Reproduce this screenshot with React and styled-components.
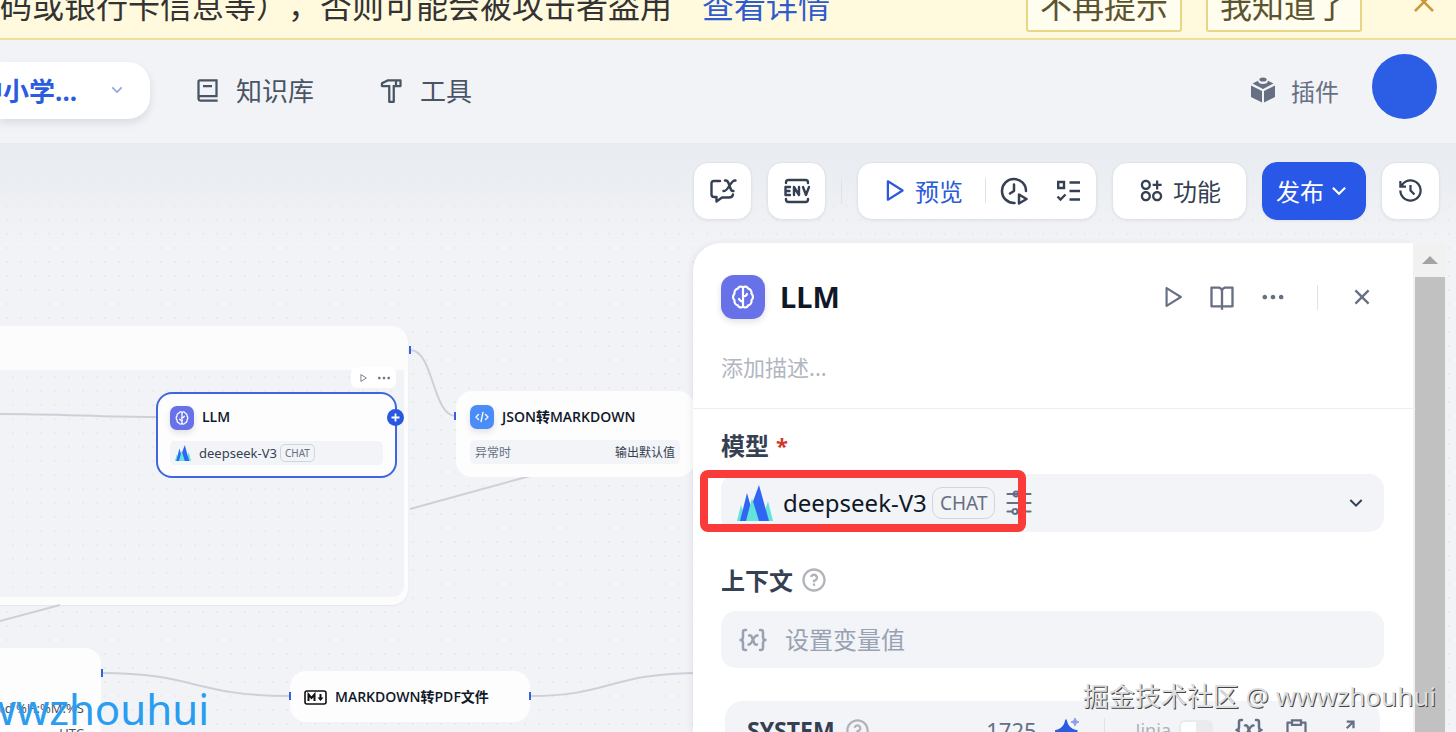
import React, { useState } from 'react';
import styled, { createGlobalStyle } from 'styled-components';
import {
  RiApps2AddLine,
  RiArrowDownSLine,
  RiBook2Line,
  RiBookOpenLine,
  RiClipboardLine,
  RiCloseLine,
  RiExpandDiagonalLine,
  RiHammerLine,
  RiHistoryLine,
  RiMoreFill,
  RiPlayLargeLine,
  RiQuestionLine,
} from 'react-icons/ri';

const GlobalStyle = createGlobalStyle`
  * {
    box-sizing: border-box;
  }

  body {
    margin: 0;
    overflow: hidden;
    background: #f1f3f7;
    color: #354052;
    font-family: 'Noto Sans', 'Noto Sans CJK SC', sans-serif;
    text-spacing-trim: space-all;
  }

  button, input, select {
    margin: 0;
    padding: 0;
    border: none;
    background: none;
    color: inherit;
    font: inherit;
    outline: none;
  }

  button {
    cursor: pointer;
  }

  svg {
    display: block;
    flex-shrink: 0;
  }
`;

const Page = styled.div`
  display: flex;
  flex-direction: column;
  height: 100vh;
  overflow: hidden;
`;

/* banner */

const Banner = styled.div`
  display: flex;
  align-items: flex-end;
  flex-shrink: 0;
  height: 40px;
  padding: 0 20px 6px 0;
  overflow: hidden;
  background: #fff9de;
  border-bottom: 2px solid #f3dd9a;
  color: #333;
  font-size: 32px;
  line-height: 52px;
  white-space: nowrap;
`;

const BannerLink = styled.a`
  margin-left: 30px;
  color: #2f5bd0;
  text-decoration: none;
`;

const BannerActions = styled.div`
  display: flex;
  gap: 24px;
  margin-left: auto;
  margin-right: 50px;
`;

const BannerButton = styled.button`
  height: 48px;
  padding: 0 12px 4px;
  border: 2px solid #e8d684;
  border-radius: 3px;
  background: #fffdee;
  color: #5c5331;
  line-height: 40px;
`;

const BannerClose = styled.button`
  display: flex;
  align-items: center;
  height: 60px;
  color: #c79a3a;
`;

/* navigation */

const Nav = styled.nav`
  display: flex;
  align-items: center;
  flex-shrink: 0;
  height: 103px;
  padding: 0 19px 3px 0;
  background: #f1f3f7;
`;

const AppSwitch = styled.button`
  display: flex;
  align-items: center;
  justify-content: flex-end;
  gap: 30px;
  width: 150px;
  height: 57px;
  padding-right: 23px;
  overflow: hidden;
  border-radius: 0 22px 22px 0;
  background: #fff;
  box-shadow: 0 4px 8px rgba(16, 24, 40, 0.1);
  color: #2b5ce0;
  font-size: 26px;
  font-weight: 700;
  white-space: nowrap;

  svg {
    color: #8fa3e6;
  }
`;

const NavLink = styled.a`
  display: flex;
  align-items: center;
  gap: 15px;
  margin-left: ${(props) => (props.$first ? '44px' : '64px')};
  color: #495464;
  font-size: 26px;
  text-decoration: none;
`;

const PluginLink = styled.a`
  display: flex;
  align-items: center;
  gap: 15px;
  margin-left: auto;
  color: #676f83;
  font-size: 24px;
  text-decoration: none;
`;

const Avatar = styled.button`
  width: 65px;
  height: 65px;
  margin: 0 0 7px 33px;
  border-radius: 50%;
  background: #2c5de5;
`;

/* canvas */

const Workspace = styled.main`
  position: relative;
  display: flex;
  flex: 1;
  justify-content: flex-end;
  min-height: 0;
`;

const Canvas = styled.div`
  position: absolute;
  inset: 0;
  overflow: hidden;
  background-color: #f1f3f7;
  background-image:
    linear-gradient(#e8ebef, rgba(241, 243, 247, 0) 100px),
    radial-gradient(circle, #e8ebf0 1px, transparent 1px);
  background-size: 100% 100%, 14px 14px;
`;

const Edges = styled.svg`
  position: absolute;
  top: 0;
  left: 0;
  width: 700px;
  height: 600px;
  fill: none;
  stroke: #cdd0d8;
  stroke-width: 2;
`;

const Node = styled.section`
  position: absolute;
  left: ${(props) => props.$x}px;
  top: ${(props) => props.$y}px;
  width: ${(props) => props.$width}px;
  padding: 12px 12px 11px;
  border: 2px solid ${(props) => (props.$selected ? '#3f66e0' : '#fdfdfe')};
  border-radius: 16px;
  background: #fdfdfe;
  color: #101828;
`;

const NodeTitle = styled.h3`
  display: flex;
  align-items: center;
  gap: 8px;
  height: 24px;
  margin: 0;
  font-family: 'Open Sans', 'Noto Sans CJK SC', sans-serif;
  font-size: 14px;
  font-weight: 600;
  white-space: nowrap;
`;

const NodeName = styled.span`
  padding-bottom: 3px;
`;

const NodeRow = styled.div`
  display: flex;
  align-items: center;
  justify-content: ${(props) => (props.$spread ? 'space-between' : 'flex-start')};
  gap: ${(props) => (props.$spread ? '0' : '3px')};
  height: 24px;
  margin-top: 11px;
  padding: 0 5px;
  border-radius: 5px;
  background: #f2f4f7;
  color: #354052;
  font-size: 12px;
  white-space: nowrap;
`;

const NodeModel = styled.span`
  margin-left: 5px;
  font-size: 13px;
`;

const Muted = styled.span`
  color: #676f83;
`;

const Group = styled.section`
  position: absolute;
  left: -40px;
  top: 183px;
  width: 448px;
  height: 279px;
  padding: 44px 4px 8px;
  border-radius: 16px;
  background: #fcfcfd;
  box-shadow: 0 1px 2px rgba(16, 24, 40, 0.06);
`;

const GroupBody = styled.div`
  height: 100%;
  border-radius: 0 0 12px 12px;
  background-color: #f1f3f7;
  background-image: radial-gradient(circle, #e8ebf0 1px, transparent 1px);
  background-size: 14px 14px;
`;

const NodeTools = styled.div`
  position: absolute;
  left: 351px;
  top: 224px;
  display: flex;
  align-items: center;
  gap: 8px;
  height: 21px;
  padding: 0 4px 0 7px;
  border-radius: 6px;
  background: #fff;
  color: #676f83;
`;

const ToolIcon = styled.button`
  display: flex;
`;

const Handle = styled.i`
  position: absolute;
  left: ${(props) => props.$x}px;
  top: ${(props) => props.$y}px;
  width: 2px;
  height: 8px;
  background: #3461e2;
`;

const AddHandle = styled.button`
  position: absolute;
  left: 387px;
  top: 266px;
  display: flex;
  align-items: center;
  justify-content: center;
  width: 17px;
  height: 17px;
  border-radius: 50%;
  background: #2857e0;
`;

const TimeNode = styled.section`
  position: absolute;
  left: -139px;
  top: 505px;
  width: 240px;
  height: 140px;
  padding: 48px 17px 0;
  border-radius: 16px;
  background: #fdfdfe;
  color: #495464;
  font-size: 13px;
  line-height: 25px;
  text-align: right;
`;

const BlueMark = styled.div`
  position: absolute;
  right: calc(100% - 209px);
  top: 538px;
  color: #2b9df0;
  font-size: 42px;
  line-height: 56px;
`;

/* right side */

const Side = styled.div`
  position: relative;
  display: flex;
  flex-direction: column;
  align-items: flex-end;
  gap: 23px;
  width: 763px;
  padding-top: 19px;
`;

const Toolbar = styled.div`
  display: flex;
  align-items: center;
  gap: 15px;
  margin-right: 16px;
`;

const ToolButton = styled.button`
  display: flex;
  align-items: center;
  justify-content: center;
  gap: ${(props) => (props.$primary ? '2px' : '8px')};
  width: ${(props) => props.$width || 59}px;
  height: 58px;
  padding-bottom: 1px;
  border: 1px solid ${(props) => (props.$primary ? '#2957e8' : '#e1e4ea')};
  border-radius: 15px;
  background: ${(props) => (props.$primary ? '#2957e8' : '#fff')};
  box-shadow: 0 1px 3px rgba(16, 24, 40, 0.06);
  color: ${(props) => (props.$primary ? '#fff' : '#354052')};
  font-size: 24px;
  white-space: nowrap;
`;

const RunGroup = styled.div`
  display: flex;
  align-items: center;
  width: 240px;
  height: 58px;
  padding: 0 12px 1px 22px;
  border: 1px solid #e1e4ea;
  border-radius: 15px;
  background: #fff;
  box-shadow: 0 1px 3px rgba(16, 24, 40, 0.06);
`;

const PreviewButton = styled.button`
  display: flex;
  align-items: center;
  gap: 8px;
  margin-right: 22px;
  color: #2b5ad9;
  font-size: 24px;
  white-space: nowrap;
`;

const RunIcon = styled.button`
  display: flex;
  margin-left: ${(props) => (props.$wide ? '28px' : '14px')};
  color: #354052;
`;

const Divider = styled.span`
  flex-shrink: 0;
  width: 1px;
  height: 25px;
  margin: 0 ${(props) => props.$space || 0}px;
  background: #dfe2e8;
`;

const PanelWrap = styled.div`
  display: flex;
  flex: 1;
  width: 100%;
  min-height: 0;
  padding-right: 10px;
`;

const Panel = styled.aside`
  flex: 1;
  overflow: hidden;
  border-radius: 28px 0 0 0;
  background: #fff;
  box-shadow: -2px 0 6px rgba(16, 24, 40, 0.06);
`;

const PanelHeader = styled.header`
  height: 166px;
  padding: 32px 37px 0 28px;
  border-bottom: 1px solid #eceef1;
`;

const TitleRow = styled.div`
  display: flex;
  align-items: center;
  height: 44px;
`;

const Title = styled.h2`
  margin: 0 auto 0 15px;
  padding-bottom: 2px;
  color: #101828;
  font-size: 29px;
  font-weight: 700;
`;

const HeaderActions = styled.div`
  display: flex;
  align-items: center;
  gap: 23px;
  color: #676f83;

  button {
    display: flex;
  }
`;

const Description = styled.input`
  width: 100%;
  height: 32px;
  margin-top: 32px;
  font-size: 22px;

  &::placeholder {
    color: #b2b6bf;
    opacity: 1;
  }
`;

const Badge = styled.span`
  display: flex;
  align-items: center;
  height: ${(props) => (props.$small ? '18px' : '32px')};
  padding: 0 ${(props) => (props.$small ? '4px' : '7px')};
  border: 1px solid #d0d5dd;
  border-radius: ${(props) => (props.$small ? '5px' : '10px')};
  color: #676f83;
  font-size: ${(props) => (props.$small ? '10px' : '19px')};
`;

const NodeIcon = styled.span`
  display: flex;
  align-items: center;
  justify-content: center;
  flex-shrink: 0;
  width: ${(props) => props.$size}px;
  height: ${(props) => props.$size}px;
  border-radius: ${(props) => (props.$size > 30 ? '13px' : '7px')};
  background: ${(props) => props.$color || '#6772e8'};
  box-shadow: 0 3px 6px rgba(16, 24, 40, 0.12);
`;

const PanelBody = styled.div`
  padding: 19px 29px 0 28px;
`;

const FieldLabel = styled.label`
  display: flex;
  align-items: center;
  gap: 7px;
  height: 36px;
  margin-bottom: ${(props) => (props.$tight ? '12px' : '10px')};
  padding-bottom: 3px;
  font-size: 24px;
  font-weight: 700;

  svg {
    color: #b0b3b8;
  }
`;

const Required = styled.span`
  color: #d0382c;
  font-size: 22px;
`;

const ModelBox = styled.div`
  position: relative;
  display: flex;
  align-items: center;
  height: 58px;
  margin-bottom: 31px;
  padding: 0 16px;
  border-radius: 15px;
  background: #f2f4f7;
`;

const ModelSelect = styled.select`
  appearance: none;
  margin: 0 5px 0 10px;
  padding-bottom: 2px;
  color: #101828;
  font-size: 24px;
`;

const ModelTune = styled.button`
  display: flex;
  margin: 0 auto 0 11px;
  color: #676f83;
`;

const Highlight = styled.div`
  position: absolute;
  left: -21px;
  top: -4px;
  width: 326px;
  height: 62px;
  border: 8px solid #fb3a3a;
  border-radius: 8px;
  pointer-events: none;
`;

const ContextBox = styled.div`
  display: flex;
  align-items: center;
  gap: 18px;
  height: 57px;
  margin-bottom: 33px;
  padding: 0 18px;
  border-radius: 15px;
  background: #f2f4f7;
  color: #98a2b3;
`;

const ContextInput = styled.input`
  flex: 1;
  font-size: 24px;

  &::placeholder {
    color: #98a2b3;
    opacity: 1;
  }
`;

const PromptBox = styled.div`
  display: flex;
  align-items: center;
  height: 100px;
  margin: 0 4px;
  padding: 0 22px 42px;
  border-radius: 18px;
  background: #f2f4f7;
  color: #676f83;
`;

const PromptTitle = styled.span`
  display: flex;
  align-items: center;
  gap: 9px;
  margin-right: auto;
  color: #354052;
  font-size: 23px;
  font-weight: 700;

  svg {
    color: #b0b3b8;
  }
`;

const Count = styled.span`
  margin-right: 18px;
  font-size: 22px;
`;

const JinjaLabel = styled.label`
  display: flex;
  align-items: center;
  gap: 8px;
  margin: 0 22px 0 6px;
  color: #adb2bb;
  font-size: 18px;
`;

const JinjaSwitch = styled.input`
  appearance: none;
  width: 34px;
  height: 20px;
  border: 2px solid #e9ebee;
  border-radius: 6px;
  background: linear-gradient(90deg, #fff 50%, #e9ebee 50%);
`;

const PromptIcon = styled.button`
  display: flex;
  margin-left: ${(props) => props.$gap || 0}px;
`;

const ScrollBar = styled.div`
  display: flex;
  flex-direction: column;
  width: 33px;
  padding: 0 1px 0 2px;
  background: #f1f1f1;
`;

const ScrollArrow = styled.div`
  display: flex;
  align-items: center;
  justify-content: center;
  height: 34px;
`;

const ScrollThumb = styled.div`
  flex: 1;
  background: #c1c1c1;
`;

const GrayMark = styled.div`
  position: absolute;
  right: 20px;
  bottom: 17px;
  color: #dedede;
  font-size: 26px;
  line-height: 37px;
  text-shadow: 1px 1px 0 #444;
  white-space: nowrap;
`;

const BrainIcon = ({ size }) => (
  <svg width={size} height={size} viewBox="0 0 24 24" fill="none" stroke="#fff" strokeWidth="2.2" strokeLinecap="round" strokeLinejoin="round">
    <path d="M12 2.500C10.500 1 7.500 1.500 6.800 3.600C4.500 4 3 6.500 3.500 8.700C1.500 10.500 1.500 13.500 3.500 15.300C3 17.500 4.500 20 6.800 20.400C7.500 22.500 10.500 23 12 21.500Z" />
    <path d="M12 2.500C13.500 1 16.500 1.500 17.200 3.600C19.500 4 21 6.500 20.500 8.700C22.500 10.500 22.500 13.500 20.500 15.300C21 17.500 19.500 20 17.200 20.400C16.500 22.500 13.500 23 12 21.500" />
    <path d="M12 11.500C14 11.500 15.500 10.500 16 9M12 16.500C10.500 16.500 8.800 15.500 8 14" />
  </svg>
);

const ModelLogo = ({ size }) => (
  <svg width={size} height={size} viewBox="0 0 36 36">
    <path d="M0 36L4 20L9 36Z" fill="#62e3dc" />
    <path d="M36 36L31 16L25 36Z" fill="#62e3dc" />
    <path d="M3 36L10 8L18 36Z" fill="#2f66f2" />
    <path d="M14 22L22 0L32 36H20Z" fill="#2f66f2" />
    <path d="M9 36L15 13L22 36Z" fill="#62e3dc" />
  </svg>
);

const SlidersIcon = () => (
  <svg width="26" height="26" viewBox="0 0 26 26" fill="none" stroke="currentColor" strokeWidth="2.200" strokeLinecap="round">
    <path d="M1.500 4H24.500M1.500 13H24.500M1.500 21.500H6M12 21.500H24.500" />
    <circle cx="10" cy="4" r="2.500" />
    <circle cx="16" cy="13" r="2.500" />
    <circle cx="9" cy="21.500" r="2.500" />
  </svg>
);

const VariableIcon = () => (
  <svg width="28" height="24" viewBox="0 0 28 24" fill="none" stroke="currentColor" strokeWidth="2.500" strokeLinecap="round" strokeLinejoin="round">
    <path d="M7 2H6Q4 2 4 4V9Q4 12 1.500 12Q4 12 4 15V20Q4 22 6 22H7M21 2H22Q24 2 24 4V9Q24 12 26.500 12Q24 12 24 15V20Q24 22 22 22H21" />
    <path d="M10 7.500Q12 6.500 13 9.500L15 14.500Q16 17.500 18 16.500M18.500 7.500Q16.500 7 14 11.500Q11.500 17 9.500 16.500" />
  </svg>
);

const BubbleIcon = () => (
  <svg width="28" height="26" viewBox="0 0 28 26" fill="none" stroke="currentColor" strokeWidth="2.400" strokeLinecap="round" strokeLinejoin="round">
    <path d="M11 3H5Q2.500 3 2.500 5.500V16.500Q2.500 19 5 19H7.500V23.500L13 19.500H20Q23.500 19.500 24 16.500" />
    <path d="M16 2.500Q18.500 2 19.500 5L21.500 10.500Q22.500 13.500 24.500 13M26.500 2.500Q24 2 20.500 7.500Q17 13.500 14.500 13" />
  </svg>
);

const EnvIcon = () => (
  <svg width="28" height="26" viewBox="0 0 28 26" fill="none" stroke="currentColor" strokeWidth="2.400" strokeLinecap="round" strokeLinejoin="round">
    <path d="M3 5V4.500Q3 2 5.500 2H22.500Q25 2 25 4.500V5M3 21V21.500Q3 24 5.500 24H22.500Q25 24 25 21.500V21" />
    <path d="M7 9H2.500V17H7M2.500 13H6.500M11 17V9L16 17V9M20 9L23 17L26 9" />
  </svg>
);

const RunHistoryIcon = () => (
  <svg width="28" height="28" viewBox="0 0 28 28" fill="none" stroke="currentColor" strokeWidth="2.500" strokeLinecap="round" strokeLinejoin="round">
    <path d="M14.500 26A12 12 0 1 1 26 14" />
    <path d="M14 7.500V14L10 16.500M19 17.500L26.500 22L19 26.500Z" />
  </svg>
);

const ChecklistIcon = () => (
  <svg width="25" height="24" viewBox="0 0 25 24" fill="none" stroke="currentColor" strokeWidth="2.400">
    <path d="M2.200 3H8V9H2.200ZM13.500 3.500H24M13.500 12H24M13.500 20.500H24M1.500 17.500L4.500 20.500L9.500 15.500" />
  </svg>
);

const PluginIcon = () => (
  <svg width="26" height="26" viewBox="0 0 26 26" fill="currentColor">
    <path d="M1 8.500L12 14V25.500L1 20ZM25 8.500L14 14V25.500L25 20Z" />
    <path d="M2.500 6.500L8 3.800Q8.500 7 13 7Q17.500 7 18 3.800L23.500 6.500L13 12Z" />
    <ellipse cx="13" cy="2.500" rx="3.600" ry="2" />
  </svg>
);

const CodeIcon = () => (
  <svg width="14" height="14" viewBox="0 0 14 14" fill="none" stroke="#fff" strokeWidth="1.300" strokeLinecap="round" strokeLinejoin="round">
    <path d="M3.500 4.500L1 7L3.500 9.500M10.500 4.500L13 7L10.500 9.500M8 2.500L6 11.500" />
  </svg>
);

const MarkdownIcon = () => (
  <svg width="23" height="15" viewBox="0 0 23 15" fill="none" stroke="#111" strokeWidth="1.600">
    <rect x="1" y="1" width="21" height="13" rx="2" />
    <path d="M4.500 11V4.500L7.500 8L10.500 4.500V11" strokeWidth="2" />
    <path d="M16.500 4V9" strokeWidth="2" />
    <path d="M13.500 7.500H19.500L16.500 11Z" fill="#111" stroke="none" />
  </svg>
);

const SparkleIcon = () => (
  <svg width="24" height="24" viewBox="0 0 24 24" fill="#2b5ce0">
    <path d="M11 2Q12.500 11 22 13Q12.500 15 11 24Q9.500 15 0 13Q9.500 11 11 2Z" strokeWidth="1.500" stroke="#2b5ce0" strokeLinejoin="round" />
    <path d="M20 0Q20.500 3.500 24 4Q20.500 4.500 20 8Q19.500 4.500 16 4Q19.500 3.500 20 0Z" fill="#8f9cea" stroke="#8f9cea" />
  </svg>
);

const App = () => {
  const [description, setDescription] = useState('');
  const [context, setContext] = useState('');
  const [jinja, setJinja] = useState(false);

  return (
    <Page>
      <GlobalStyle />
      <Banner>
        <span>码或银行卡信息等），否则可能会被攻击者盗用</span>
        <BannerLink href="#details">查看详情</BannerLink>
        <BannerActions>
          <BannerButton type="button">不再提示</BannerButton>
          <BannerButton type="button">我知道了</BannerButton>
        </BannerActions>
        <BannerClose type="button" aria-label="关闭">
          <svg width="24" height="24" viewBox="0 0 24 24" fill="none" stroke="currentColor" strokeWidth="2.500">
            <path d="M3 3L21 21M21 3L3 21" />
          </svg>
        </BannerClose>
      </Banner>

      <Nav>
        <AppSwitch type="button">
          <span>中小学...</span>
          <RiArrowDownSLine size={20} />
        </AppSwitch>
        <NavLink href="#knowledge" $first>
          <RiBook2Line size={27} />
          知识库
        </NavLink>
        <NavLink href="#tools">
          <RiHammerLine size={27} />
          工具
        </NavLink>
        <PluginLink href="#plugins">
          <PluginIcon />
          插件
        </PluginLink>
        <Avatar type="button" aria-label="账户" />
      </Nav>

      <Workspace>
        <Canvas>
          <Group>
            <GroupBody />
          </Group>
          <Edges>
            <path d="M0 271C60 271 100 274 156 274" />
            <path d="M410 207C434 207 432 273 456 273" />
            <path d="M410 366L530 333" />
            <path d="M0 478L60 462" />
            <path d="M102 530C195 530 195 553 290 553" />
            <path d="M531 553C610 553 610 530 700 530" />
          </Edges>
          <Node $x={156} $y={249} $width={241} $selected>
            <NodeTitle>
              <NodeIcon $size={24}><BrainIcon size={14} /></NodeIcon>
              <NodeName>LLM</NodeName>
            </NodeTitle>
            <NodeRow>
              <ModelLogo size={16} />
              <NodeModel>deepseek-V3</NodeModel>
              <Badge $small>CHAT</Badge>
            </NodeRow>
          </Node>
          <NodeTools>
            <ToolIcon type="button" aria-label="运行"><RiPlayLargeLine size={10} /></ToolIcon>
            <ToolIcon type="button" aria-label="更多"><RiMoreFill size={16} /></ToolIcon>
          </NodeTools>
          <AddHandle type="button" aria-label="添加">
            <svg width="9" height="9" viewBox="0 0 9 9" stroke="#fff" strokeWidth="1.800">
              <path d="M4.500 0.500V8.500M0.500 4.500H8.500" />
            </svg>
          </AddHandle>
          <Node $x={456} $y={248} $width={238}>
            <NodeTitle>
              <NodeIcon $size={24} $color="#4b8df8"><CodeIcon /></NodeIcon>
              <NodeName>JSON转MARKDOWN</NodeName>
            </NodeTitle>
            <NodeRow $spread>
              <Muted>异常时</Muted>
              <span>输出默认值</span>
            </NodeRow>
          </Node>
          <Node $x={290} $y={528} $width={240}>
            <NodeTitle>
              <MarkdownIcon />
              <NodeName>MARKDOWN转PDF文件</NodeName>
            </NodeTitle>
          </Node>
          <TimeNode>
            <div>%Y-%m-%d %H:%M:%S</div>
            <div>UTC</div>
          </TimeNode>
          <Handle $x={409} $y={203} />
          <Handle $x={454} $y={269} />
          <Handle $x={101} $y={526} />
          <Handle $x={289} $y={549} />
          <Handle $x={529} $y={549} />
          <BlueMark>wwwzhouhui</BlueMark>
        </Canvas>

        <Side>
          <Toolbar>
            <ToolButton type="button" aria-label="会话变量"><BubbleIcon /></ToolButton>
            <ToolButton type="button" aria-label="环境变量"><EnvIcon /></ToolButton>
            <Divider />
            <RunGroup>
              <PreviewButton type="button">
                <RiPlayLargeLine size={27} />
                预览
              </PreviewButton>
              <Divider />
              <RunIcon type="button" aria-label="运行历史"><RunHistoryIcon /></RunIcon>
              <RunIcon type="button" aria-label="检查清单" $wide><ChecklistIcon /></RunIcon>
            </RunGroup>
            <ToolButton type="button" $width={135}>
              <RiApps2AddLine size={27} />
              功能
            </ToolButton>
            <ToolButton type="button" $primary $width={104}>
              发布
              <RiArrowDownSLine size={26} />
            </ToolButton>
            <ToolButton type="button" aria-label="版本历史"><RiHistoryLine size={27} /></ToolButton>
          </Toolbar>

          <PanelWrap>
            <Panel>
              <PanelHeader>
                <TitleRow>
                  <NodeIcon $size={44}><BrainIcon size={24} /></NodeIcon>
                  <Title>LLM</Title>
                  <HeaderActions>
                    <button type="button" aria-label="运行"><RiPlayLargeLine size={26} /></button>
                    <button type="button" aria-label="帮助"><RiBookOpenLine size={28} /></button>
                    <button type="button" aria-label="更多"><RiMoreFill size={28} /></button>
                    <Divider $space={7} />
                    <button type="button" aria-label="关闭"><RiCloseLine size={28} /></button>
                  </HeaderActions>
                </TitleRow>
                <Description
                  aria-label="描述"
                  placeholder="添加描述..."
                  value={description}
                  onChange={(e) => setDescription(e.target.value)}
                />
              </PanelHeader>
              <PanelBody>
                <FieldLabel htmlFor="model">
                  模型
                  <Required>*</Required>
                </FieldLabel>
                <ModelBox>
                  <ModelLogo size={36} />
                  <ModelSelect id="model" defaultValue="deepseek-V3">
                    <option>deepseek-V3</option>
                  </ModelSelect>
                  <Badge>CHAT</Badge>
                  <ModelTune type="button" aria-label="模型参数"><SlidersIcon /></ModelTune>
                  <RiArrowDownSLine size={24} />
                  <Highlight />
                </ModelBox>
                <FieldLabel htmlFor="context" $tight>
                  上下文
                  <RiQuestionLine size={28} />
                </FieldLabel>
                <ContextBox>
                  <VariableIcon />
                  <ContextInput
                    id="context"
                    placeholder="设置变量值"
                    value={context}
                    onChange={(e) => setContext(e.target.value)}
                  />
                </ContextBox>
                <PromptBox>
                  <PromptTitle>
                    SYSTEM
                    <RiQuestionLine size={27} />
                  </PromptTitle>
                  <Count>1725</Count>
                  <PromptIcon type="button" aria-label="生成提示词"><SparkleIcon /></PromptIcon>
                  <Divider $space={25} />
                  <JinjaLabel>
                    Jinja
                    <JinjaSwitch type="checkbox" checked={jinja} onChange={(e) => setJinja(e.target.checked)} />
                  </JinjaLabel>
                  <PromptIcon type="button" aria-label="插入变量"><VariableIcon /></PromptIcon>
                  <PromptIcon type="button" aria-label="复制" $gap={20}><RiClipboardLine size={27} /></PromptIcon>
                  <PromptIcon type="button" aria-label="展开" $gap={21}><RiExpandDiagonalLine size={27} /></PromptIcon>
                </PromptBox>
              </PanelBody>
            </Panel>
            <ScrollBar>
              <ScrollArrow>
                <svg width="16" height="8" viewBox="0 0 16 8"><path d="M0 8L8 0L16 8Z" fill="#a3a3a3" /></svg>
              </ScrollArrow>
              <ScrollThumb />
            </ScrollBar>
          </PanelWrap>
          <GrayMark>掘金技术社区 @ wwwzhouhui</GrayMark>
        </Side>
      </Workspace>
    </Page>
  );
};

export default App;
